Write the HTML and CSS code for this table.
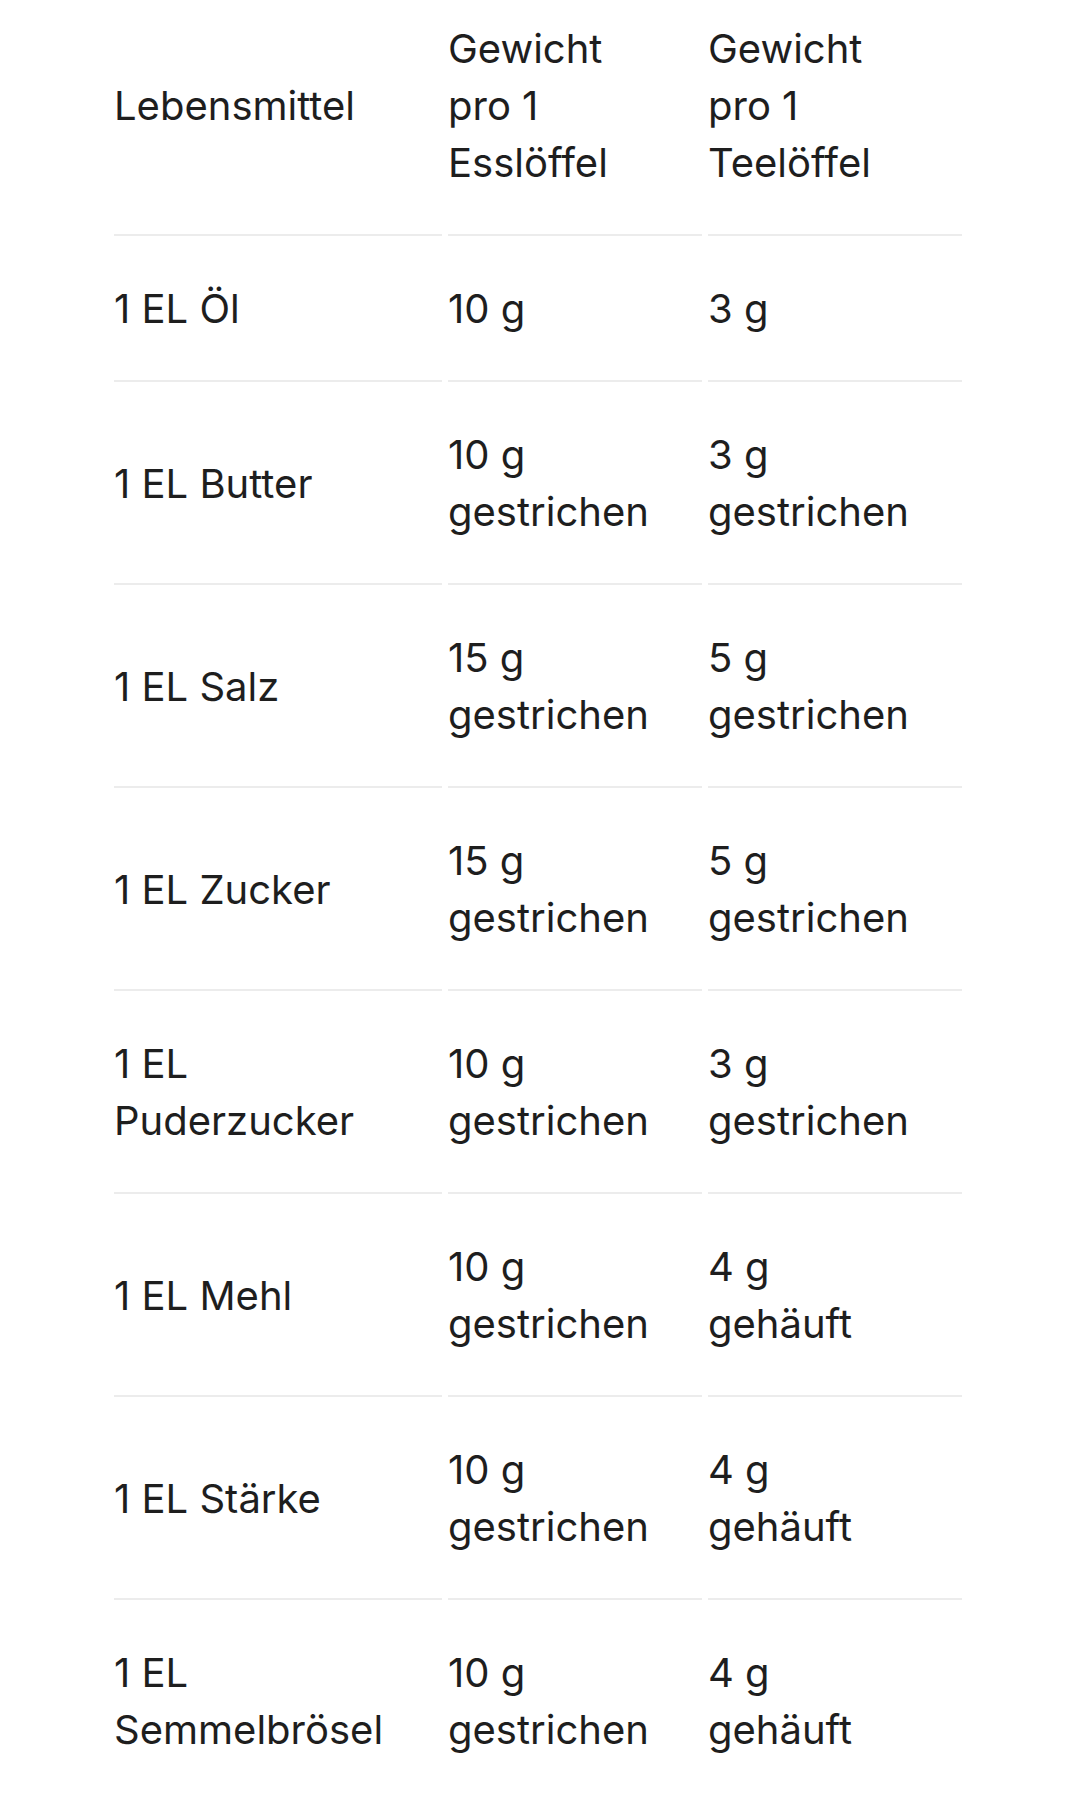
FILE: index.html
```html
<!DOCTYPE html>
<html lang="de">
<head>
<meta charset="utf-8">
<title>Löffel-Gewichte</title>
<link rel="stylesheet" href="styles.css">
</head>
<body>
<div class="wrap">
<table class="spoon-table">
  <colgroup>
    <col class="c1"><col class="c2"><col class="c3">
  </colgroup>
  <thead>
    <tr>
      <th>Lebensmittel</th>
      <th>Gewicht pro 1 Esslöffel</th>
      <th>Gewicht pro 1 Teelöffel</th>
    </tr>
  </thead>
  <tbody>
    <tr><td>1 EL Öl</td><td>10 g</td><td>3 g</td></tr>
    <tr><td>1 EL Butter</td><td>10 g gestrichen</td><td>3 g gestrichen</td></tr>
    <tr><td>1 EL Salz</td><td>15 g gestrichen</td><td>5 g gestrichen</td></tr>
    <tr><td>1 EL Zucker</td><td>15 g gestrichen</td><td>5 g gestrichen</td></tr>
    <tr><td>1 EL Puderzucker</td><td>10 g gestrichen</td><td>3 g gestrichen</td></tr>
    <tr><td>1 EL Mehl</td><td>10 g gestrichen</td><td>4 g gehäuft</td></tr>
    <tr><td>1 EL Stärke</td><td>10 g gestrichen</td><td>4 g gehäuft</td></tr>
    <tr><td>1 EL Semmelbrösel</td><td>10 g gestrichen</td><td>4 g gehäuft</td></tr>
  </tbody>
</table>
</div>
</body>
</html>
```

FILE: styles.css
```css
html, body {
  margin: 0;
  padding: 0;
  background: #ffffff;
}
.wrap {
  padding: 0 0 0 108px;
}
.spoon-table {
  border-collapse: separate;
  border-spacing: 6px 0;
  table-layout: fixed;
  width: 860px;
  font-family: Inter, "Liberation Sans", sans-serif;
  font-size: 40px;
  line-height: 57px;
  color: #1e1e1e;
}
.c1 { width: 328px; }
.c2 { width: 254px; }
.c3 { width: 254px; }
.spoon-table th,
.spoon-table td {
  text-align: left;
  font-weight: 400;
  vertical-align: middle;
  padding: 44px 46px 43px 0;
  border-bottom: 2px solid #ececec;
}
.spoon-table th {
  padding-top: 20px;
}
.spoon-table tbody tr:last-child td {
  border-bottom: none;
}
```
